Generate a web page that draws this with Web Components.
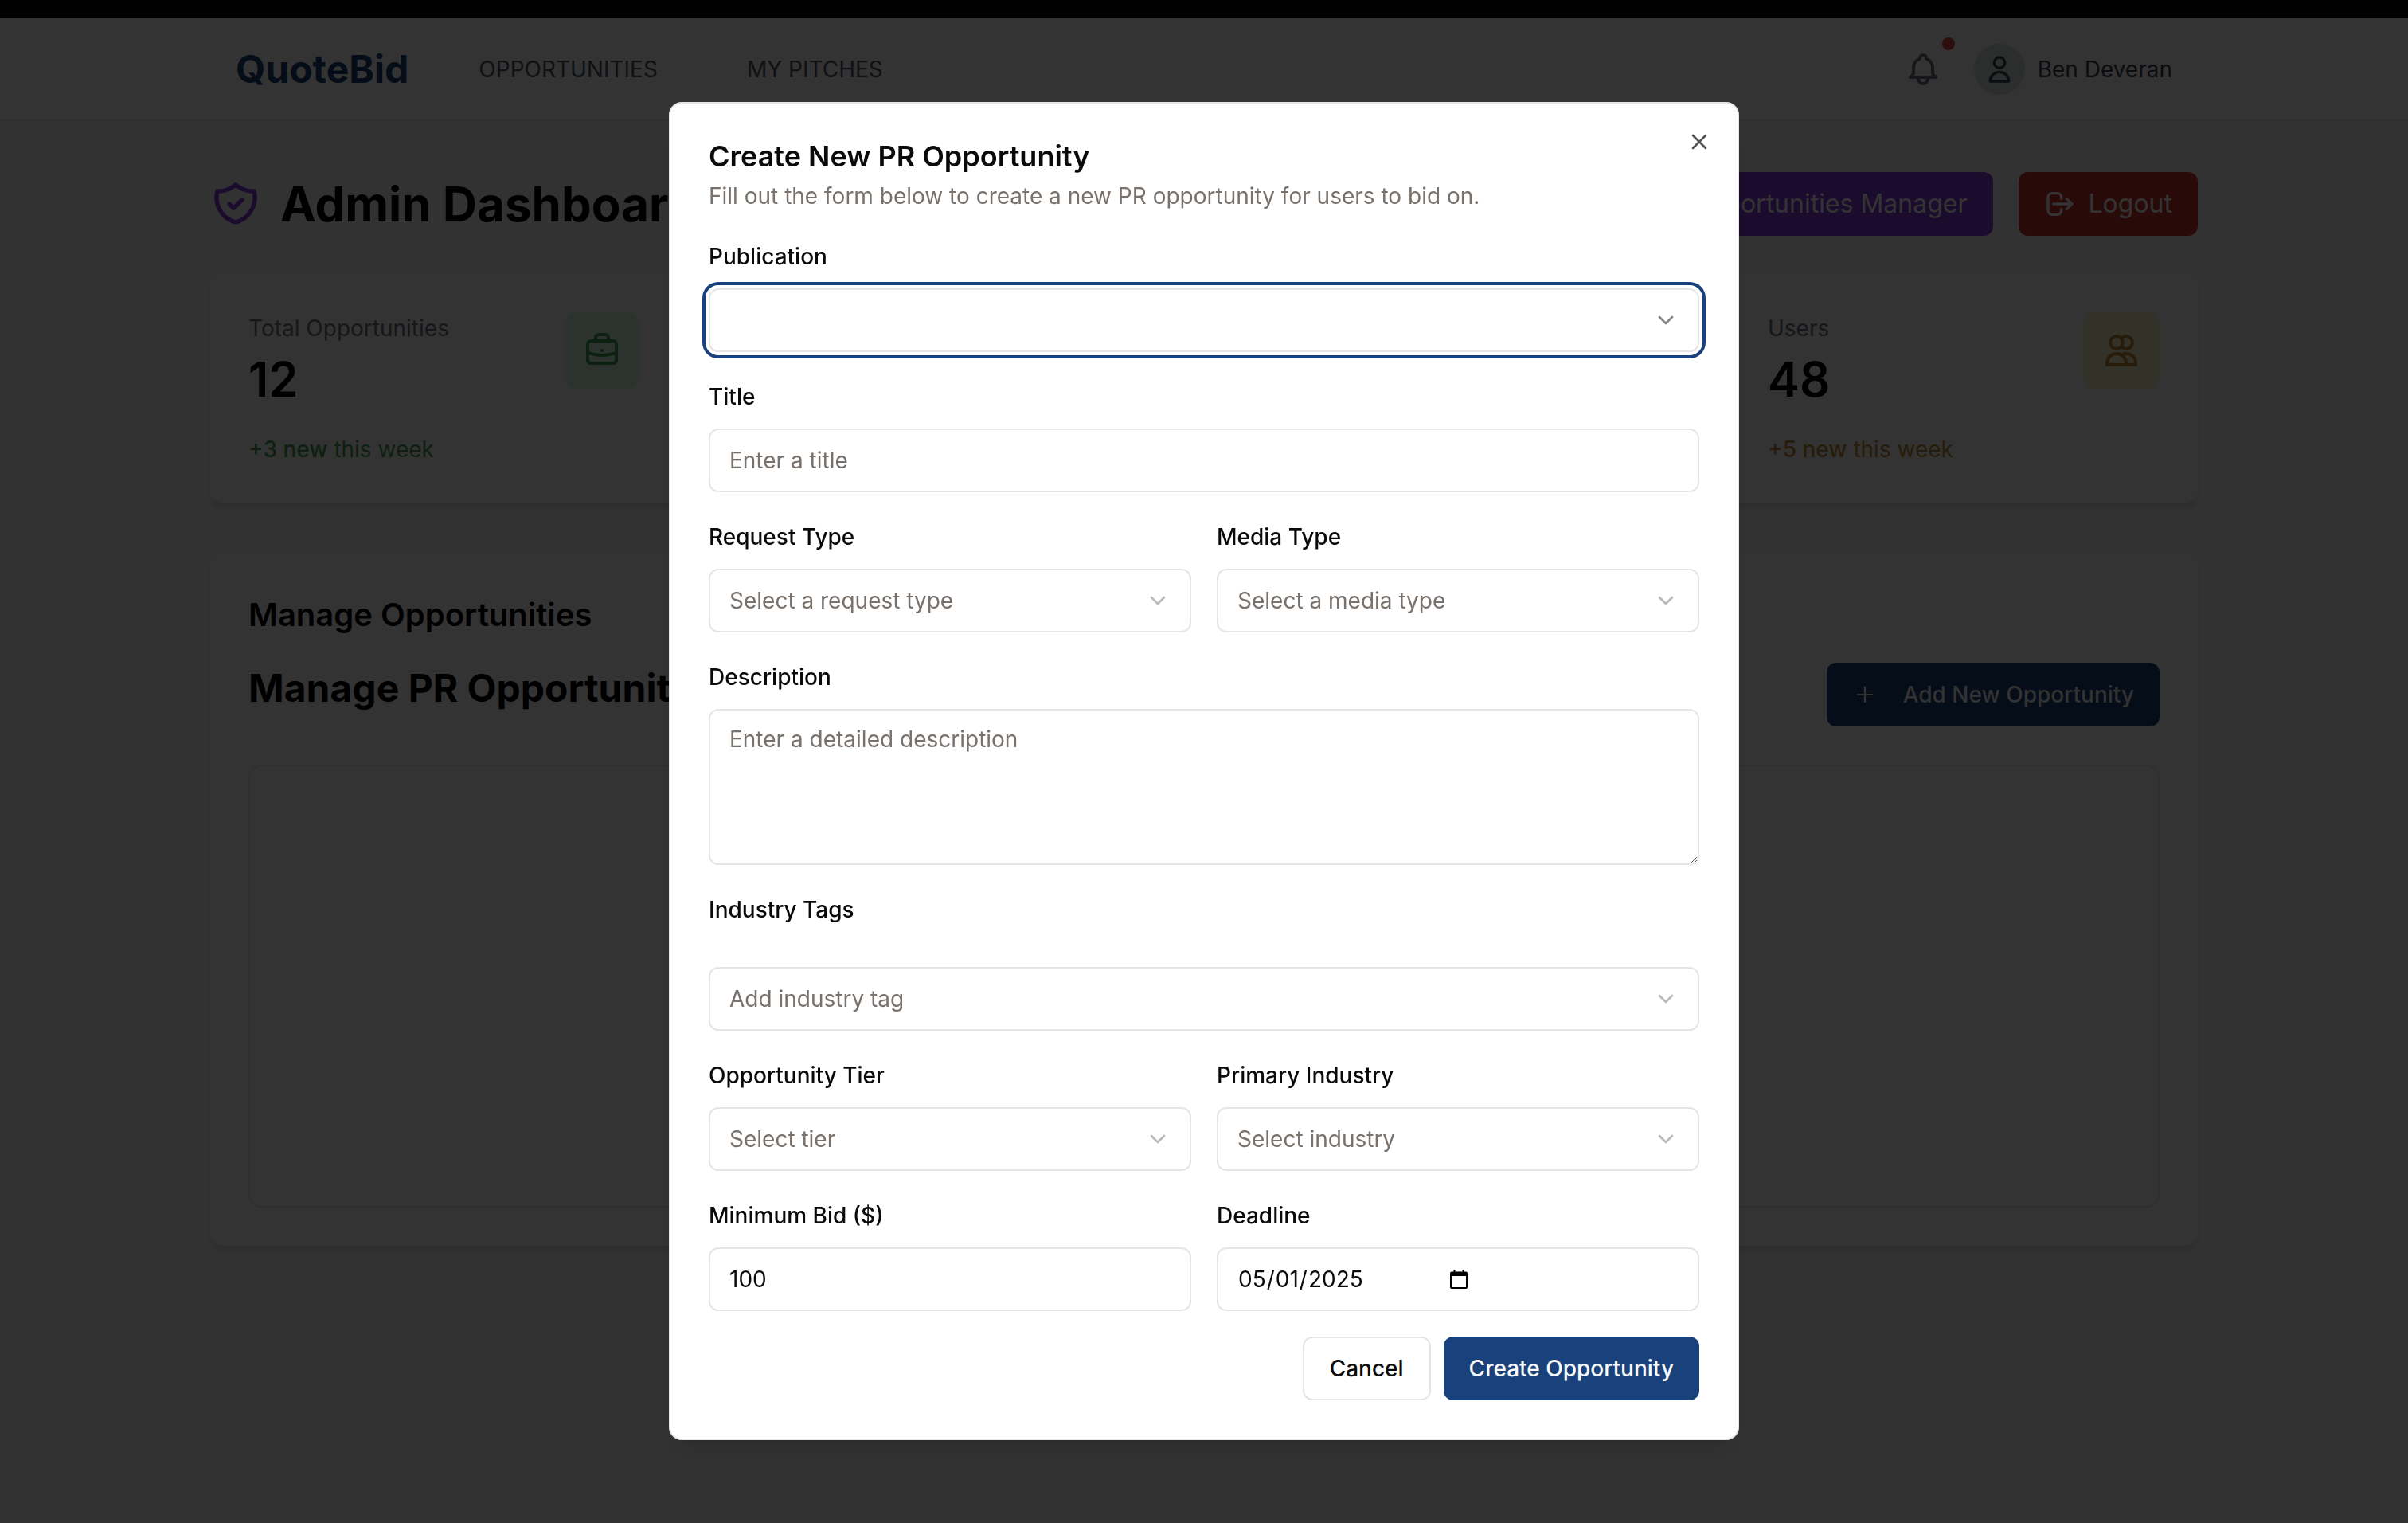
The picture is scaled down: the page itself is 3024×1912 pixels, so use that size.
<!DOCTYPE html>
<html lang="en">
<head>
<meta charset="utf-8">
<title>QuoteBid Admin</title>
<style>
  html, body { margin: 0; min-height: 100%; }
  body {
    font-family: Inter, "Liberation Sans", sans-serif;
    font-size: 28px;
    line-height: 40px;
    color: #0a0a0a;
    background: #f9fafb;
  }
</style>
</head>
<body>
<qb-app></qb-app>
<script>
const BASE = `
  *, *::before, *::after { box-sizing: border-box; }
  h1, h2, h3, p { margin: 0; }
  button, input, select, textarea { font: inherit; color: inherit; margin: 0; }
  svg { display: block; flex: none; }
  a { color: inherit; text-decoration: none; }
`;

class Base extends HTMLElement {
  connectedCallback() {
    if (this.shadowRoot) return;
    this.attachShadow({ mode: 'open' });
    this.shadowRoot.innerHTML = `<style>${BASE}${this.styles()}</style>${this.markup()}`;
  }
  styles() { return ':host { display: block; }'; }
  markup() { return '<slot></slot>'; }
}

const ICONS = {
  shield: '<path d="M9 12l2 2 4-4m5.618-4.016A11.955 11.955 0 0112 2.944a11.955 11.955 0 01-8.618 3.04A12.02 12.02 0 003 9c0 5.591 3.824 10.29 9 11.622 5.176-1.332 9-6.03 9-11.622 0-1.042-.133-2.052-.382-3.016z"/>',
  logout: '<path d="M17 16l4-4m0 0l-4-4m4 4H7m6 4v1a3 3 0 01-3 3H6a3 3 0 01-3-3V7a3 3 0 013-3h4a3 3 0 013 3v1"/>',
  bell: '<path d="M15 17h5l-1.405-1.405A2.032 2.032 0 0118 14.158V11a6.002 6.002 0 00-4-5.659V5a2 2 0 10-4 0v.341C7.67 6.165 6 8.388 6 11v3.159c0 .538-.214 1.055-.595 1.436L4 17h5m6 0v1a3 3 0 11-6 0v-1m6 0H9"/>',
  user: '<path d="M16 7a4 4 0 11-8 0 4 4 0 018 0zM12 14a7 7 0 00-7 7h14a7 7 0 00-7-7z"/>',
  briefcase: '<path d="M21 13.255A23.931 23.931 0 0112 15c-3.183 0-6.22-.62-9-1.745M16 6V4a2 2 0 00-2-2h-4a2 2 0 00-2 2v2m4 6h.01M5 20h14a2 2 0 002-2V8a2 2 0 00-2-2H5a2 2 0 00-2 2v10a2 2 0 002 2z"/>',
  users: '<path d="M12 4.354a4 4 0 110 5.292M15 21H3v-1a6 6 0 0112 0v1zm0 0h6v-1a6 6 0 00-9-5.197M13 7a4 4 0 11-8 0 4 4 0 018 0z"/>',
  plus: '<path stroke-width="1.6" d="M5 12h14M12 5v14"/>',
  chevron: '<path d="m6 9 6 6 6-6"/>',
  close: '<path d="M18 6 6 18M6 6l12 12"/>',
  calendar: '<path fill="currentColor" stroke="none" fill-rule="evenodd" d="M5.500 0h2v2.500h9V0h2v2.500h2.500a2 2 0 0 1 2 2V22a2 2 0 0 1-2 2H3a2 2 0 0 1-2-2V4.500a2 2 0 0 1 2-2h2.500zM3 8v14h18V8z"/>'
};

customElements.define('qb-icon', class extends Base {
  styles() {
    const s = this.getAttribute('size') || 32;
    return `:host { display: block; flex: none; width: ${s}px; height: ${s}px; } svg { width: 100%; height: 100%; }`;
  }
  markup() {
    return `<svg viewBox="0 0 24 24" fill="none" stroke="currentColor" stroke-width="2" stroke-linecap="round" stroke-linejoin="round" aria-hidden="true">${ICONS[this.getAttribute('name')]}</svg>`;
  }
});

customElements.define('qb-button', class extends Base {
  styles() {
    return `
      :host { display: block; flex: none; }
      button {
        display: flex; align-items: center; justify-content: center; gap: var(--gap, 16px);
        height: 80px; padding: 0 32px; border: 0; border-radius: 12px;
        font-size: 28px; font-weight: 500; line-height: 40px; white-space: nowrap;
        background: #19417c; color: #fafaf9;
      }
      :host([variant="outline"]) button { background: #fff; color: #0a0a0a; border: 2px solid #e5e5e5; }
      :host([variant="purple"]) button { background: #8738dc; color: #fff; font-size: 32px; font-weight: 400; }
      :host([variant="red"]) button { background: #c8322b; color: #fff; font-size: 32px; font-weight: 400; }
    `;
  }
  markup() { return '<button type="button"><slot name="icon"></slot><slot></slot></button>'; }
});

customElements.define('qb-topbar', class extends Base {
  styles() {
    return `
      :host { display: block; background: #fff; border-bottom: 2px solid #eceef0; }
      .inner { display: flex; align-items: center; max-width: 2560px; height: 127px; margin: 0 auto; padding: 0 64px; }
      .logo { font-size: 48px; line-height: 64px; font-weight: 700; color: #19417c; }
      nav { display: flex; gap: 112px; margin-left: 88px; color: #4b5563; }
      .right { display: flex; align-items: center; margin-left: auto; }
      .bell { position: relative; padding: 0; border: 0; background: none; color: #6b7280; margin-right: 40px; }
      .dot { position: absolute; top: -16px; right: -16px; width: 16px; height: 16px; border-radius: 50%; background: #dc4a43; }
      .avatar { display: grid; place-items: center; width: 64px; height: 64px; border-radius: 50%; background: #dcdee2; color: #374151; margin-right: 16px; }
      .name { color: #374151; }
    `;
  }
  markup() {
    return `
      <div class="inner">
        <a class="logo" href="#">QuoteBid</a>
        <nav><a href="#">OPPORTUNITIES</a><a href="#">MY PITCHES</a></nav>
        <div class="right">
          <button class="bell" type="button" aria-label="Notifications"><qb-icon name="bell" size="48"></qb-icon><span class="dot"></span></button>
          <span class="avatar"><qb-icon name="user" size="40"></qb-icon></span>
          <span class="name">Ben Deveran</span>
        </div>
      </div>`;
  }
});

customElements.define('qb-card', class extends Base {
  styles() {
    return `:host { display: block; padding: 48px; border-radius: 16px; background: #fff;
      box-shadow: 0 8px 12px -2px rgba(0,0,0,.1), 0 4px 8px -4px rgba(0,0,0,.1); }`;
  }
});

customElements.define('qb-stat', class extends Base {
  styles() {
    return `
      :host { display: block; }
      .top { display: flex; justify-content: space-between; align-items: flex-start; }
      .label { color: #6b7280; }
      .value { margin-top: 8px; font-size: 60px; line-height: 72px; font-weight: 600; color: #000; }
      .badge { display: grid; place-items: center; width: 96px; height: 96px; border-radius: 16px; background: var(--tint); color: var(--ink); }
      .note { margin-top: 32px; color: var(--ink); }
      .note b { font-weight: 500; }
    `;
  }
  markup() {
    const a = n => this.getAttribute(n);
    return `
      <qb-card>
        <div class="top">
          <div><p class="label">${a('label')}</p><p class="value">${a('value')}</p></div>
          <span class="badge"><qb-icon name="${a('icon')}" size="48"></qb-icon></span>
        </div>
        <p class="note"><b>${a('delta')} new</b> this week</p>
      </qb-card>`;
  }
});

customElements.define('qb-dashboard', class extends Base {
  styles() {
    return `
      :host { display: block; }
      main { max-width: 2560px; margin: 0 auto; padding: 64px 32px; }
      .head { display: flex; align-items: center; gap: 24px; margin-bottom: 48px; color: #8738dc; }
      h1 { font-size: 60px; line-height: 72px; font-weight: 700; color: #000; }
      .actions { display: flex; gap: 32px; margin-left: auto; }
      .stats { display: grid; grid-template-columns: repeat(4, 1fr); gap: 48px; margin-bottom: 64px; }
      h2 { font-size: 40px; line-height: 56px; font-weight: 600; color: #000; }
      .row { display: flex; justify-content: space-between; align-items: flex-start; margin: 32px 0 48px; }
      h3 { font-size: 48px; line-height: 64px; font-weight: 700; color: #000; }
      .list { height: 556px; border: 2px solid #e8e8e8; border-radius: 16px; }
    `;
  }
  markup() {
    return `
      <main>
        <div class="head">
          <qb-icon name="shield" size="64"></qb-icon>
          <h1>Admin Dashboard</h1>
          <div class="actions">
            <qb-button variant="purple">Opportunities Manager</qb-button>
            <qb-button variant="red"><qb-icon slot="icon" name="logout" size="40"></qb-icon>Logout</qb-button>
          </div>
        </div>
        <div class="stats">
          <qb-stat style="--tint:#dcfae7;--ink:#47a154" label="Total Opportunities" value="12" delta="+3" icon="briefcase"></qb-stat>
          <qb-card></qb-card>
          <qb-card></qb-card>
          <qb-stat style="--tint:#faf9c8;--ink:#c38c2d" label="Users" value="48" delta="+5" icon="users"></qb-stat>
        </div>
        <qb-card>
          <h2>Manage Opportunities</h2>
          <div class="row">
            <h3>Manage PR Opportunities</h3>
            <qb-button style="--gap:32px"><qb-icon slot="icon" name="plus"></qb-icon>Add New Opportunity</qb-button>
          </div>
          <div class="list"></div>
        </qb-card>
      </main>`;
  }
});

customElements.define('qb-field', class extends Base {
  styles() {
    return `
      :host { display: block; min-width: 0; }
      label { display: block; margin-bottom: var(--label-gap, 16px); line-height: 48px; font-weight: 500; }
      .box { position: relative; }
      .control {
        display: block; width: 100%; height: 80px; padding: 0 24px;
        border: 2px solid #e5e5e5; border-radius: 12px; outline: 0;
        background: #fff; color: #0a0a0a; line-height: 40px; appearance: none;
      }
      select.control { padding-right: 72px; color: #78716c; }
      input[type=number] { appearance: textfield; }
      textarea.control { height: 196px; padding: 16px 24px; resize: vertical; }
      ::placeholder { color: #78716c; opacity: 1; }
      .box qb-icon { position: absolute; top: 24px; right: 26px; color: #bbb8b5; pointer-events: none; }
      :host([active]) .control { box-shadow: 0 0 0 4px #fff, 0 0 0 8px #19417c; }
      :host([active]) .box qb-icon { color: #858585; }
      .date { display: flex; align-items: center; gap: 56px; }
      .date input { padding: 0; border: 0; outline: 0; background: none; appearance: none; }
      .date qb-icon { position: static; color: #000; }
      ::-webkit-calendar-picker-indicator { display: none; }
      ::-webkit-datetime-edit { padding: 0; }
    `;
  }
  markup() {
    const a = n => this.getAttribute(n) || '';
    const control = {
      select: () => `<div class="box"><select class="control" id="c"><option>${a('hint')}</option></select><qb-icon name="chevron"></qb-icon></div>`,
      textarea: () => `<textarea class="control" id="c" placeholder="${a('hint')}"></textarea>`,
      date: () => `<div class="control date"><input type="date" id="c" value="${a('value')}"><qb-icon name="calendar" size="24"></qb-icon></div>`,
      number: () => `<input class="control" type="number" id="c" value="${a('value')}">`,
      text: () => `<input class="control" type="text" id="c" placeholder="${a('hint')}">`
    }[a('kind')]();
    return `<label for="c">${a('label')}</label>${control}`;
  }
});

customElements.define('qb-dialog', class extends Base {
  styles() {
    return `
      :host {
        position: fixed; inset: 0; display: flex; align-items: center; justify-content: center;
        padding-top: 23px; background: rgba(0,0,0,.8);
      }
      section {
        position: relative; width: 1344px; max-width: 100%; padding: 48px; border: 2px solid #e5e5e5; border-radius: 16px;
        background: #fff; box-shadow: 0 20px 30px -6px rgba(0,0,0,.1), 0 8px 12px -8px rgba(0,0,0,.1);
      }
      h2 { font-size: 36px; line-height: 36px; font-weight: 600; }
      .sub { margin-top: 12px; color: #78716c; }
      .close { position: absolute; top: 32px; right: 32px; padding: 0; border: 0; background: none; color: #545454; }
      form { display: grid; gap: 32px; margin-top: 32px; }
      .pair { display: grid; grid-template-columns: 1fr 1fr; gap: 32px; }
      .foot { display: flex; justify-content: flex-end; gap: 16px; }
    `;
  }
  markup() {
    return `
      <section role="dialog" aria-modal="true" aria-labelledby="t">
        <h2 id="t">Create New PR Opportunity</h2>
        <p class="sub">Fill out the form below to create a new PR opportunity for users to bid on.</p>
        <button class="close" type="button" aria-label="Close"><qb-icon name="close"></qb-icon></button>
        <form>
          <qb-field active kind="select" label="Publication"></qb-field>
          <qb-field kind="text" label="Title" hint="Enter a title"></qb-field>
          <div class="pair">
            <qb-field kind="select" label="Request Type" hint="Select a request type"></qb-field>
            <qb-field kind="select" label="Media Type" hint="Select a media type"></qb-field>
          </div>
          <qb-field kind="textarea" label="Description" hint="Enter a detailed description"></qb-field>
          <qb-field style="--label-gap:48px" kind="select" label="Industry Tags" hint="Add industry tag"></qb-field>
          <div class="pair">
            <qb-field kind="select" label="Opportunity Tier" hint="Select tier"></qb-field>
            <qb-field kind="select" label="Primary Industry" hint="Select industry"></qb-field>
          </div>
          <div class="pair">
            <qb-field kind="number" label="Minimum Bid ($)" value="100"></qb-field>
            <qb-field kind="date" label="Deadline" value="2025-05-01"></qb-field>
          </div>
          <div class="foot">
            <qb-button variant="outline">Cancel</qb-button>
            <qb-button>Create Opportunity</qb-button>
          </div>
        </form>
      </section>`;
  }
});

customElements.define('qb-app', class extends Base {
  styles() { return ':host { display: block; } .strip { height: 23px; background: #000; }'; }
  markup() {
    return `<div class="strip"></div><qb-topbar></qb-topbar><qb-dashboard></qb-dashboard><qb-dialog></qb-dialog>`;
  }
});
</script>
</body>
</html>
